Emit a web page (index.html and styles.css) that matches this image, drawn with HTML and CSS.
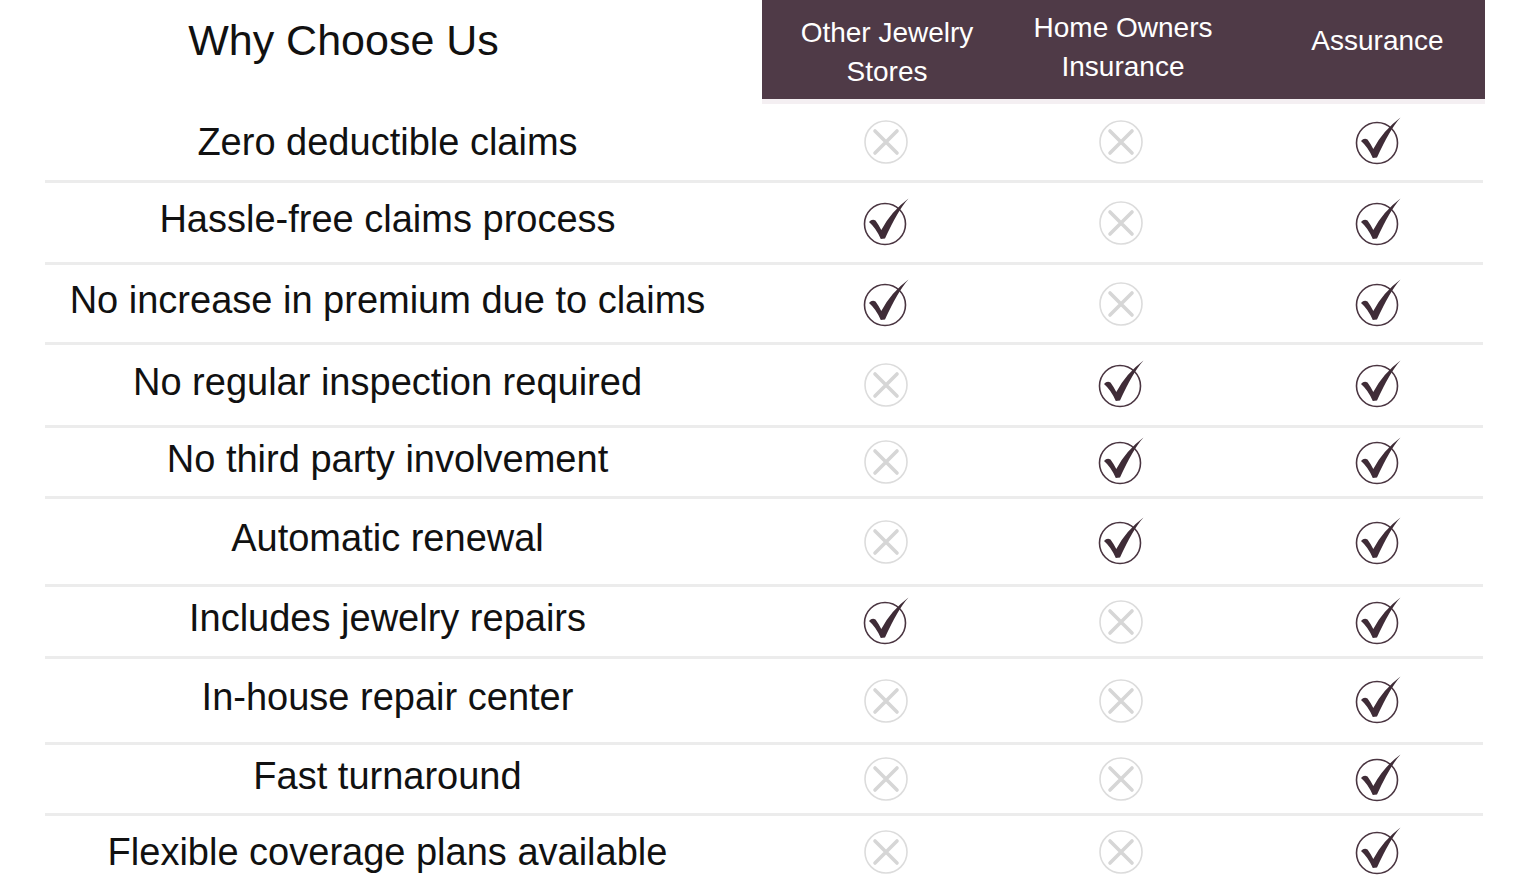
FILE: index.html
```html
<!DOCTYPE html>
<html lang="en">
<head>
<meta charset="utf-8">
<title>Why Choose Us</title>
<link rel="stylesheet" href="styles.css">
</head>
<body>
<svg width="0" height="0" class="defs" aria-hidden="true">
  <defs>
    <symbol id="yes" viewBox="0 0 50 50">
      <circle cx="24" cy="26" r="20.5" fill="none" stroke="#4a3541" stroke-width="1.6"/>
      <path d="M8 24 Q11 20.5 14.5 22.5 Q17.5 26.5 20.3 32 Q30 13.5 47.5 0.5 Q37 12 24 40.5 L19.8 41 Q15 30 8 24 Z" fill="#3f2c37"/>
    </symbol>
    <symbol id="no" viewBox="0 0 50 50">
      <circle cx="25" cy="25" r="21" fill="none" stroke="#dcdcdc" stroke-width="1.6"/>
      <path d="M14 14 L36 36 M36 14 L14 36" stroke="#d6d6d6" stroke-width="3.6" stroke-linecap="round"/>
    </symbol>
  </defs>
</svg>
<div class="table">
  <div class="head">
    <h1 class="title">Why Choose Us</h1>
    <div class="band">
      <div class="hcell c1 h-other">Other Jewelry<br>Stores</div>
      <div class="hcell c2 h-home">Home Owners<br>Insurance</div>
      <div class="hcell c3 h-assur">Assurance</div>
    </div>
  </div>

  <div class="row">
    <div class="label">Zero deductible claims</div>
    <div class="cell c1"><svg class="ic"><use href="#no"/></svg></div>
    <div class="cell c2"><svg class="ic"><use href="#no"/></svg></div>
    <div class="cell c3"><svg class="ic"><use href="#yes"/></svg></div>
  </div>
  <div class="row">
    <div class="label">Hassle-free claims process</div>
    <div class="cell c1"><svg class="ic"><use href="#yes"/></svg></div>
    <div class="cell c2"><svg class="ic"><use href="#no"/></svg></div>
    <div class="cell c3"><svg class="ic"><use href="#yes"/></svg></div>
  </div>
  <div class="row">
    <div class="label">No increase in premium due to claims</div>
    <div class="cell c1"><svg class="ic"><use href="#yes"/></svg></div>
    <div class="cell c2"><svg class="ic"><use href="#no"/></svg></div>
    <div class="cell c3"><svg class="ic"><use href="#yes"/></svg></div>
  </div>
  <div class="row">
    <div class="label">No regular inspection required</div>
    <div class="cell c1"><svg class="ic"><use href="#no"/></svg></div>
    <div class="cell c2"><svg class="ic"><use href="#yes"/></svg></div>
    <div class="cell c3"><svg class="ic"><use href="#yes"/></svg></div>
  </div>
  <div class="row">
    <div class="label">No third party involvement</div>
    <div class="cell c1"><svg class="ic"><use href="#no"/></svg></div>
    <div class="cell c2"><svg class="ic"><use href="#yes"/></svg></div>
    <div class="cell c3"><svg class="ic"><use href="#yes"/></svg></div>
  </div>
  <div class="row">
    <div class="label">Automatic renewal</div>
    <div class="cell c1"><svg class="ic"><use href="#no"/></svg></div>
    <div class="cell c2"><svg class="ic"><use href="#yes"/></svg></div>
    <div class="cell c3"><svg class="ic"><use href="#yes"/></svg></div>
  </div>
  <div class="row">
    <div class="label">Includes jewelry repairs</div>
    <div class="cell c1"><svg class="ic"><use href="#yes"/></svg></div>
    <div class="cell c2"><svg class="ic"><use href="#no"/></svg></div>
    <div class="cell c3"><svg class="ic"><use href="#yes"/></svg></div>
  </div>
  <div class="row">
    <div class="label">In-house repair center</div>
    <div class="cell c1"><svg class="ic"><use href="#no"/></svg></div>
    <div class="cell c2"><svg class="ic"><use href="#no"/></svg></div>
    <div class="cell c3"><svg class="ic"><use href="#yes"/></svg></div>
  </div>
  <div class="row">
    <div class="label">Fast turnaround</div>
    <div class="cell c1"><svg class="ic"><use href="#no"/></svg></div>
    <div class="cell c2"><svg class="ic"><use href="#no"/></svg></div>
    <div class="cell c3"><svg class="ic"><use href="#yes"/></svg></div>
  </div>
  <div class="row">
    <div class="label">Flexible coverage plans available</div>
    <div class="cell c1"><svg class="ic"><use href="#no"/></svg></div>
    <div class="cell c2"><svg class="ic"><use href="#no"/></svg></div>
    <div class="cell c3"><svg class="ic"><use href="#yes"/></svg></div>
  </div>
</div>
</body>
</html>
```

FILE: styles.css
```css
html, body {
  margin: 0;
  padding: 0;
  background: #ffffff;
}
body {
  font-family: "Liberation Sans", Arial, sans-serif;
  color: #111111;
  overflow: hidden;
}
.defs {
  position: absolute;
  width: 0;
  height: 0;
}
.table {
  margin-left: 45px;
  width: 1440px;
}
.head {
  display: flex;
  height: 104px;
}
.title {
  margin: 0;
  width: 597px;
  height: 80px;
  display: flex;
  align-items: center;
  justify-content: center;
  font-weight: normal;
  font-size: 43px;
}
.band {
  margin-left: 120px;
  width: 723px;
  height: 99px;
  background: #4f3a47;
  border-bottom: 5px solid #f4eff2;
  display: flex;
  color: #ffffff;
}
.hcell {
  display: flex;
  align-items: center;
  justify-content: center;
  text-align: center;
  font-size: 28px;
  line-height: 39px;
}
.band .c1 { width: 250px; }
.band .c2 { width: 222px; }
.band .c3 { width: 251px; padding-left: 36px; box-sizing: border-box; }
.h-other { padding-top: 4px; }
.h-home { padding-bottom: 6px; }
.h-assur { padding-bottom: 19px; }

.row {
  display: flex;
  align-items: center;
  border-bottom: 3px solid #ececec;
  height: 76px;
  width: 1438px;
}
.row:nth-of-type(2) { height: 76px; }
.row:nth-of-type(3) { height: 79px; }
.row:nth-of-type(4) { height: 77px; }
.row:nth-of-type(5) { height: 80px; }
.row:nth-of-type(6) { height: 68px; }
.row:nth-of-type(7) { height: 85px; }
.row:nth-of-type(8) { height: 69px; }
.row:nth-of-type(9) { height: 83px; }
.row:nth-of-type(10) { height: 68px; }
.row:nth-of-type(11) { height: 72px; border-bottom: none; }

.label {
  width: 686px;
  text-align: center;
  font-size: 38px;
  margin-right: 31px;
  padding-bottom: 6px;
}
.row:nth-of-type(2) .label { padding-bottom: 0; }
.row:nth-of-type(11) .label { padding-bottom: 0; }
.cell {
  display: flex;
  justify-content: center;
  align-items: center;
}
.row .c1 { width: 250px; }
.row .c2 { width: 222px; }
.row .c3 { width: 251px; padding-left: 40px; box-sizing: border-box; }
.ic {
  width: 50px;
  height: 50px;
  overflow: visible;
}
```
